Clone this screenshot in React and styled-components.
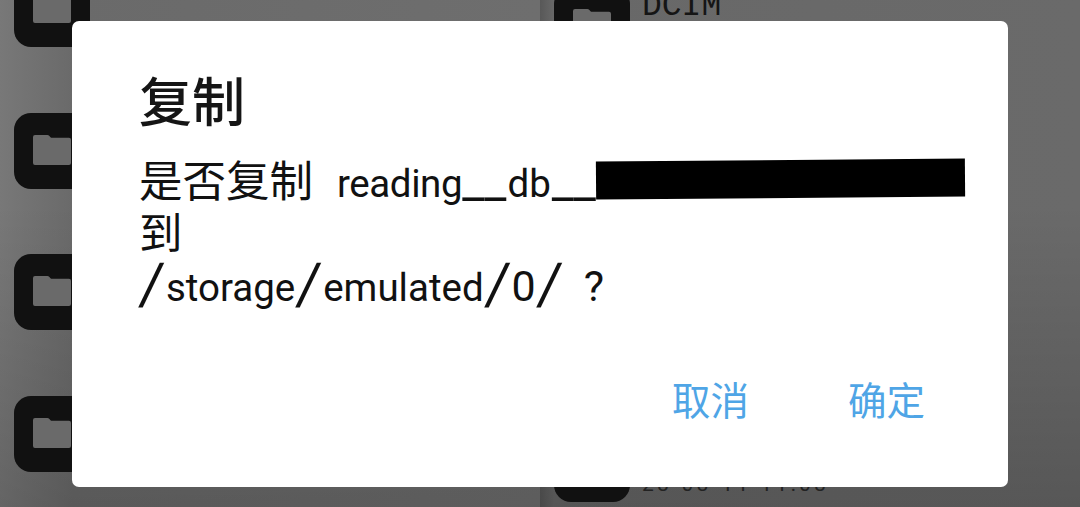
import React from "react";
import styled, { createGlobalStyle } from "styled-components";

const Global = createGlobalStyle`
  html, body { margin: 0; padding: 0; background: #666; }
  #root { width: 1080px; height: 507px; overflow: hidden; }
`;

const Screen = styled.div`
  position: relative;
  display: grid;
  grid-template-columns: 540px 540px;
  width: 1080px;
  height: 507px;
  overflow: hidden;
  font-family: "Roboto", "Noto Sans CJK SC", sans-serif;
  color: #111;
`;

const LeftPanel = styled.div`
  display: flex;
  flex-direction: column;
  gap: 65.5px;
  padding: 0 0 0 14px;
  background:
    linear-gradient(180deg, rgba(0, 0, 0, 0) 40%, rgba(0, 0, 0, 0.16) 100%),
    linear-gradient(90deg, #787878 0, #6a6a6a 72px, #6e6e6e 100%);
`;

const RightPanel = styled.div`
  display: flex;
  flex-direction: column;
  justify-content: space-between;
  height: 507px;
  box-sizing: border-box;
  padding: 0 0 5px 14px;
  background:
    linear-gradient(180deg, rgba(0, 0, 0, 0) 40%, rgba(0, 0, 0, 0.18) 100%),
    linear-gradient(90deg, #585858 0, #686868 14px, #6a6a6a 100%);
`;

const FileRow = styled.div`
  display: flex;
  align-items: flex-start;
  gap: 12px;
  flex: none;
  margin-top: ${(p) => p.$top || 0}px;
`;

const FileTile = styled.svg`
  flex: none;
  width: 76px;
  height: 76px;
  display: block;
`;

const FileName = styled.div`
  font-family: "Liberation Mono", monospace;
  font-size: 33px;
  line-height: 28px;
  margin-top: 6px;
  color: #151515;
`;

const FileDate = styled.div`
  font-size: 21px;
  line-height: 24px;
  letter-spacing: 3.4px;
  margin-top: 46px;
  color: #222;
`;

const Dialog = styled.div`
  position: absolute;
  left: 72px;
  top: 21px;
  width: 936px;
  height: 466px;
  box-sizing: border-box;
  display: flex;
  flex-direction: column;
  padding: 42px 40px 67px 67px;
  background: #fff;
  border-radius: 7px;
`;

const Title = styled.h2`
  margin: 0;
  font-family: "Noto Sans CJK SC", sans-serif;
  font-size: 53px;
  font-weight: 500;
  line-height: 72px;
  color: #151515;
`;

const Message = styled.div`
  margin-top: 18px;
  display: flex;
  flex-direction: column;
  font-size: 38.5px;
  color: #111;
`;

const Line = styled.div`
  height: ${(p) => p.$h}px;
  line-height: ${(p) => p.$h}px;
  white-space: nowrap;
`;

const Cjk = styled.span`
  font-family: "Noto Sans CJK SC", sans-serif;
  font-size: 43.5px;
`;

const Word = styled.span`
  letter-spacing: ${(p) => p.$ls || 0}px;
  margin-left: ${(p) => p.$ml || 0}px;
`;

const Digit = styled.span`
  font-size: 43px;
  margin-left: ${(p) => p.$ml || 0}px;
`;

const Slash = styled.span`
  display: inline-block;
  font-size: 58px;
  line-height: 0;
  vertical-align: -3px;
  margin: 0 ${(p) => p.$mr ?? 2}px 0 ${(p) => p.$ml ?? 2}px;
  transform: skewX(-5.5deg);
`;

const Bars = styled.span`
  font-size: 49px;
  line-height: 0;
  margin-left: ${(p) => p.$ml || 0}px;
`;

const Redaction = styled.span`
  display: inline-block;
  width: 369px;
  height: 38px;
  background: #000;
  vertical-align: -1px;
  transform: rotate(-0.45deg);
`;

const Actions = styled.div`
  margin-top: auto;
  display: flex;
  justify-content: flex-end;
  gap: 99px;
  padding-right: 43px;
`;

const ActionButton = styled.button`
  padding: 0;
  border: 0;
  background: none;
  font-family: "Noto Sans CJK SC", sans-serif;
  font-size: 38.5px;
  line-height: 44px;
  color: #4fa5e6;
`;

const Folder = () => (
  <FileTile viewBox="0 0 76 76">
    <rect width="76" height="76" rx="17" fill="#111" />
    <path
      d="M21 22h12.5a2 2 0 0 1 1.4.6l1.6 1.6a2 2 0 0 0 1.4.6H55a2 2 0 0 1 2 2V50a2 2 0 0 1-2 2H21a2 2 0 0 1-2-2V24a2 2 0 0 1 2-2z"
      fill="#6a6a6a"
    />
  </FileTile>
);

export default function App() {
  return (
    <Screen>
      <Global />
      <LeftPanel>
        <FileRow $top={-29}><Folder /></FileRow>
        <FileRow><Folder /></FileRow>
        <FileRow><Folder /></FileRow>
        <FileRow><Folder /></FileRow>
      </LeftPanel>
      <RightPanel>
        <FileRow $top={-13}>
          <Folder />
          <FileName>DCIM</FileName>
        </FileRow>
        <FileRow>
          <Folder />
          <FileDate>23-03-11 11:03</FileDate>
        </FileRow>
      </RightPanel>
      <Dialog>
        <Title>复制</Title>
        <Message>
          <Line $h={52}>
            <Cjk>是否复制</Cjk>
            <Word $ml={24} $ls={-0.4}>reading</Word>
            <Bars>__</Bars>
            <Word $ml={1}>db</Word>
            <Bars $ml={1}>__</Bars>
            <Redaction />
          </Line>
          <Line $h={52}>
            <Cjk>到</Cjk>
          </Line>
          <Line $h={58}>
            <Slash $ml={1}>/</Slash>
            <Word>storage</Word>
            <Slash>/</Slash>
            <Word>emulated</Word>
            <Slash>/</Slash>
            <Digit>0</Digit>
            <Slash>/</Slash>
            <Digit $ml={20}>?</Digit>
          </Line>
        </Message>
        <Actions>
          <ActionButton>取消</ActionButton>
          <ActionButton>确定</ActionButton>
        </Actions>
      </Dialog>
    </Screen>
  );
}
